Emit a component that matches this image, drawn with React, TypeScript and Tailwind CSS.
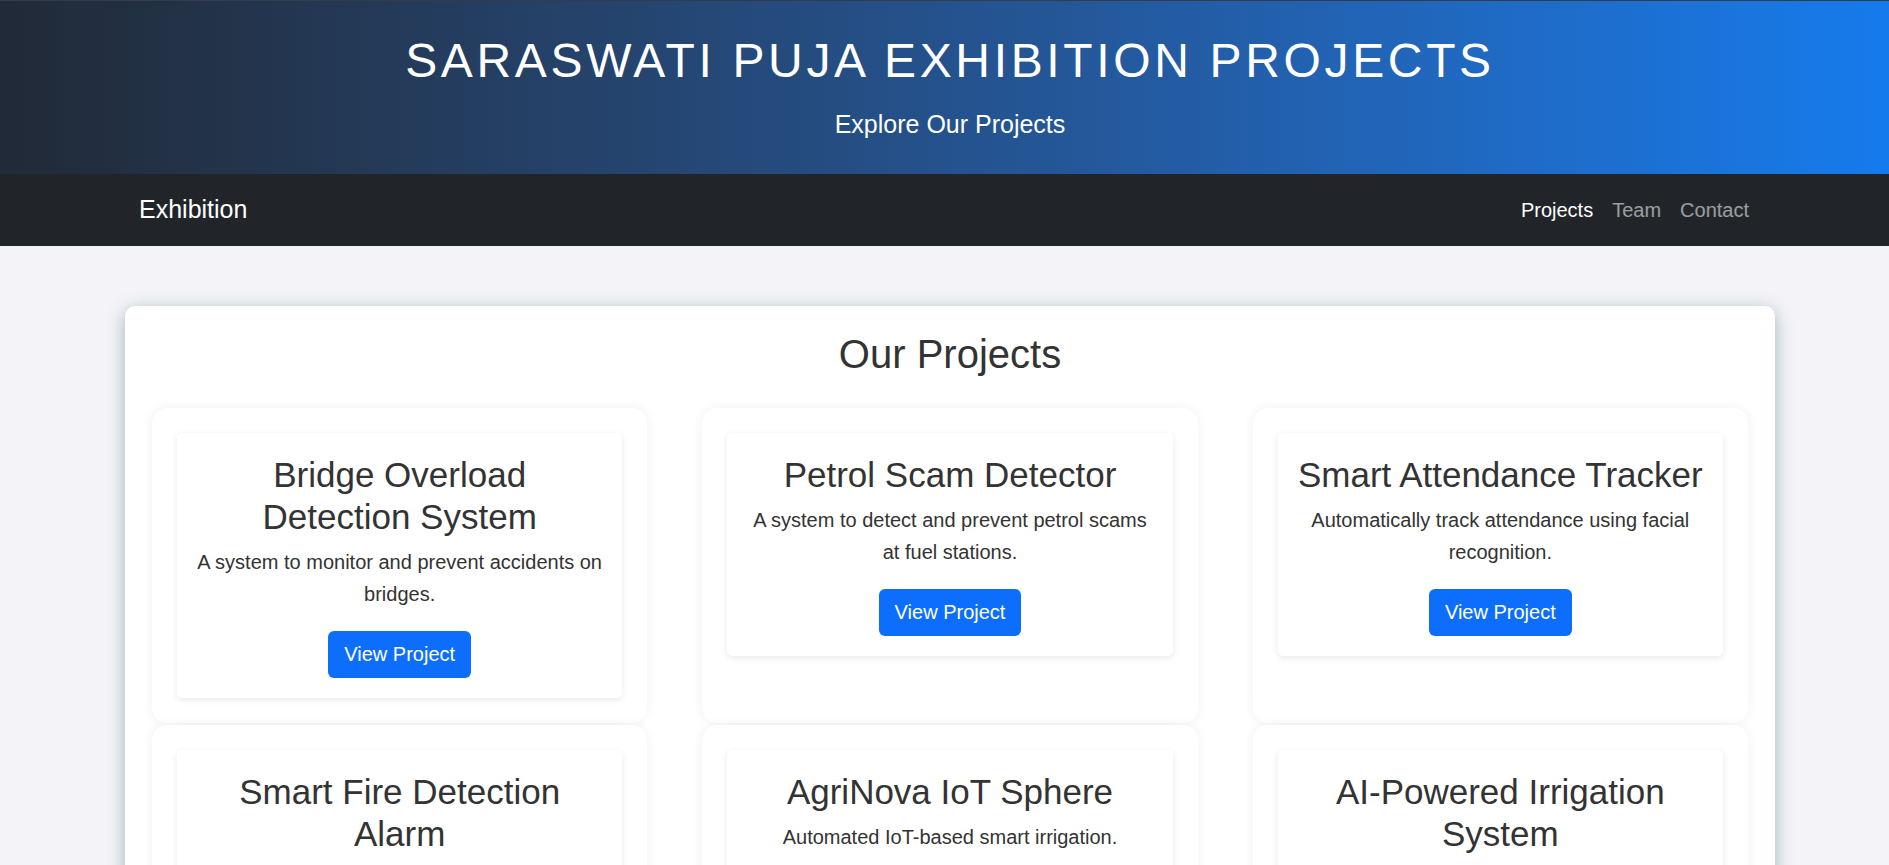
const projects = [
  {
    title: "Bridge Overload Detection System",
    desc: "A system to monitor and prevent accidents on bridges.",
  },
  {
    title: "Petrol Scam Detector",
    desc: "A system to detect and prevent petrol scams at fuel stations.",
  },
  {
    title: "Smart Attendance Tracker",
    desc: "Automatically track attendance using facial recognition.",
  },
  {
    title: "Smart Fire Detection Alarm",
    desc: "Detects smoke and fire early and raises an alarm.",
  },
  {
    title: "AgriNova IoT Sphere",
    desc: "Automated IoT-based smart irrigation.",
  },
  {
    title: "AI-Powered Irrigation System",
    desc: "Waters crops only when the soil needs it.",
  },
];

function ProjectCard({ title, desc }: { title: string; desc: string }) {
  return (
    <div className="rounded-[15px] bg-white p-[25px] shadow-[0_0_12px_rgba(0,0,0,0.06)]">
      <div className="rounded-[5px] bg-white px-4 pt-[21px] pb-5 text-center shadow-[0_2px_7px_rgba(0,0,0,0.09)]">
        <h3 className="mx-[2.5px] mb-2 text-[35px] leading-[1.2] font-normal text-[#333]">{title}</h3>
        <p className="text-[20px] leading-[32px] text-[#333]">{desc}</p>
        <button className="mt-[21px] h-[47px] rounded-md bg-[#0d6efd] px-4 text-[20px] text-white">
          View Project
        </button>
      </div>
    </div>
  );
}

export default function App() {
  return (
    <div className="min-h-screen bg-[#f4f4f8] font-['Liberation_Sans',Arial,sans-serif]">
      {/* Header */}
      <header className="bg-linear-to-r from-[#212a37] to-[#157bec] py-8 pl-[11px] text-center text-white shadow-[inset_0_1px_0_#343b49]">
        <h1 className="mb-4 text-[48px] leading-[1.2] font-normal tracking-[3.65px]">
          SARASWATI PUJA EXHIBITION PROJECTS
        </h1>
        <p className="text-[25px] leading-[36px]">Explore Our Projects</p>
      </header>

      {/* Nav */}
      <nav className="flex h-[72px] items-center justify-between bg-[#212529] px-[139px]">
        <span className="text-[25px] text-white">Exhibition</span>
        <div className="flex gap-[19px] pr-[1px] text-[20px]">
          <a className="text-white">Projects</a>
          <a className="text-white/55">Team</a>
          <a className="text-white/55">Contact</a>
        </div>
      </nav>

      {/* Projects */}
      <main className="mt-[60px] mb-12 ml-[125px] w-[1650px] rounded-[10px] bg-white px-[27px] pt-[24px] pb-8 shadow-[0_4px_18px_rgba(30,90,90,0.4)]">
        <h2 className="mb-[30px] text-center text-[40px] leading-[1.2] font-normal text-[#333]">
          Our Projects
        </h2>
        <div className="grid grid-cols-3 gap-x-[55px] gap-y-[2px]">
          {projects.map((p) => (
            <ProjectCard key={p.title} title={p.title} desc={p.desc} />
          ))}
        </div>
      </main>
    </div>
  );
}
